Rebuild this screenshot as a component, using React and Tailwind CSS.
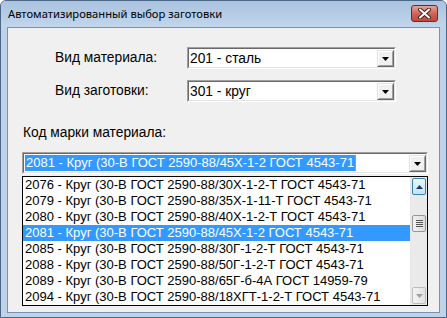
import React from 'react'

const font = { fontFamily: '"Liberation Sans", Arial, sans-serif' }

const items = [
  '2076 - Круг (30-В ГОСТ 2590-88/30Х-1-2-Т ГОСТ 4543-71',
  '2079 - Круг (30-В ГОСТ 2590-88/35Х-1-11-Т ГОСТ 4543-71',
  '2080 - Круг (30-В ГОСТ 2590-88/40Х-1-2-Т ГОСТ 4543-71',
  '2081 - Круг (30-В ГОСТ 2590-88/45Х-1-2 ГОСТ 4543-71',
  '2085 - Круг (30-В ГОСТ 2590-88/30Г-1-2-Т ГОСТ 4543-71',
  '2088 - Круг (30-В ГОСТ 2590-88/50Г-1-2-Т ГОСТ 4543-71',
  '2089 - Круг (30-В ГОСТ 2590-88/65Г-б-4А ГОСТ 14959-79',
  '2094 - Круг (30-В ГОСТ 2590-88/18ХГТ-1-2-Т ГОСТ 4543-71',
]

function Arrow({ color = '#000', up = false }) {
  return (
    <svg width="7" height="4" viewBox="0 0 7 4">
      <path d={up ? 'M0 4 L7 4 L3.5 0 Z' : 'M0 0 L7 0 L3.5 4 Z'} fill={color} />
    </svg>
  )
}

function DropButton() {
  return (
    <div className="w-[17px] h-[17px] shrink-0 border border-t-[#e3e3e3] border-l-[#e3e3e3] border-r-[#696969] border-b-[#696969] bg-[#f0f0f0]">
      <div className="h-full border border-t-white border-l-white border-r-[#a0a0a0] border-b-[#a0a0a0] flex items-center justify-center pt-px">
        <Arrow />
      </div>
    </div>
  )
}

function Combo({ value, width, selected }) {
  return (
    <div className={`${width} h-[22px] border border-t-[#a0a0a0] border-l-[#a0a0a0] border-r-white border-b-white`}>
      <div className="h-full border border-t-[#696969] border-l-[#696969] border-r-[#e3e3e3] border-b-[#e3e3e3] bg-white flex items-center">
        <div className="flex-1 flex items-center pl-px h-full">
          {selected ? (
            <span className="bg-[#3399ff] text-white text-[13px] leading-[16px] px-px border-r border-[#e08a3c]">{value}</span>
          ) : (
            <span className="text-[13.8px] leading-[17px] text-black">{value}</span>
          )}
        </div>
        <DropButton />
      </div>
    </div>
  )
}

function Scrollbar() {
  return (
    <div className="w-[17px] h-full bg-[#eaeaea] flex flex-col border-l border-[#e6e6e6]">
      <div className="h-[17px] mx-px mt-px rounded-[2px] border border-[#3c7fb1] bg-gradient-to-b from-[#eaf6fd] to-[#bee6fd] flex items-center justify-center">
        <Arrow up color="#1e395b" />
      </div>
      <div className="h-[20px]" />
      <div className="h-[17px] mx-px rounded-[2px] border border-[#979797] bg-gradient-to-r from-[#f2f2f2] to-[#dcdcdc] flex flex-col items-center justify-center gap-px">
        <div className="w-[7px] h-px bg-[#555]" />
        <div className="w-[7px] h-px bg-[#555]" />
        <div className="w-[7px] h-px bg-[#555]" />
        <div className="w-[7px] h-px bg-[#555]" />
      </div>
      <div className="flex-1" />
      <div className="h-[17px] mx-px mb-px rounded-[2px] border border-[#bcbcbc] bg-gradient-to-r from-[#f4f4f4] to-[#e2e2e2] flex items-center justify-center">
        <Arrow color="#a0a0a0" />
      </div>
    </div>
  )
}

export default function App() {
  return (
    <div className="w-[447px] h-[318px] flex flex-col border border-[#4c6685] rounded-t-[6px] bg-[#bed3ea] overflow-hidden" style={font}>
      <div className="h-[26px] shrink-0 flex items-center justify-between bg-gradient-to-b from-[#a9c2de] to-[#c2d6ec] pl-[7px] pr-[8px]">
        <span className="text-[11.2px] text-black" style={{ fontFamily: '"Noto Sans", "Open Sans", sans-serif' }}>
          Автоматизированный выбор заготовки
        </span>
        <div className="w-[27px] h-[17px] -mt-[1px] rounded-[3px] border border-[#6d2a25] bg-gradient-to-b from-[#e3a496] via-[#cf6457] to-[#c2473c] flex items-center justify-center">
          <svg width="13" height="11" viewBox="0 0 13 11">
            <path d="M2 1.5 L11 9.5 M11 1.5 L2 9.5" stroke="#4a2220" strokeWidth="4" strokeLinecap="round" />
            <path d="M2 1.5 L11 9.5 M11 1.5 L2 9.5" stroke="#fff" strokeWidth="2" strokeLinecap="round" />
          </svg>
        </div>
      </div>
      <div className="flex-1 mx-[6px] mb-[4px] border border-[#7a92b0] bg-[#f0f0f0] flex flex-col">
        <div className="mt-[19px] flex items-center pl-[47px]">
          <span className="w-[132px] text-[13.8px] text-black">Вид материала:</span>
          <Combo value="201 - сталь" width="w-[209px]" />
        </div>
        <div className="mt-[11px] flex items-center pl-[47px]">
          <span className="w-[132px] text-[13.8px] text-black">Вид заготовки:</span>
          <Combo value="301 - круг" width="w-[209px]" />
        </div>
        <div className="mt-[23px] pl-[15px] text-[13.8px] leading-[16px] text-black">Код марки материала:</div>
        <div className="mt-[11px] pl-[14px]">
          <Combo value="2081 - Круг (30-В ГОСТ 2590-88/45Х-1-2 ГОСТ 4543-71" width="w-[406px]" selected />
        </div>
        <div className="mt-[2px] ml-[14px] w-[406px] h-[130px] border border-black bg-white flex">
          <div className="flex-1 flex flex-col">
            {items.map((t, i) => (
              <div
                key={t}
                className={`h-[16px] leading-[16px] pl-[2px] text-[13px] whitespace-nowrap ${i === 3 ? 'bg-[#3399ff] text-white' : 'text-black'}`}
              >
                {t}
              </div>
            ))}
          </div>
          <Scrollbar />
        </div>
      </div>
    </div>
  )
}
